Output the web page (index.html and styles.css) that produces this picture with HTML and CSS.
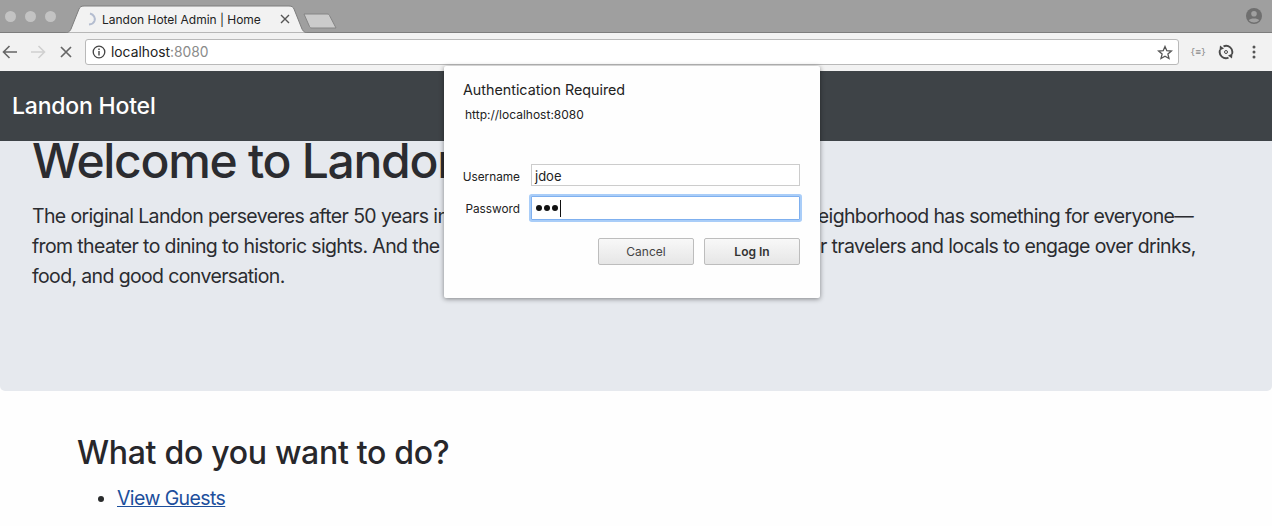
FILE: index.html
```html
<!DOCTYPE html>
<html lang="en">
<head>
<meta charset="utf-8">
<title>Landon Hotel Admin | Home</title>
<link rel="stylesheet" href="styles.css">
</head>
<body>
<div class="browser">
  <div class="tabstrip">
    <div class="lights"><i class="light"></i><i class="light"></i><i class="light"></i></div>
    <div class="tab">
      <svg class="tab-shape" width="243" height="28" viewBox="0 0 243 28"><path d="M0 28 C4 27.500 5 26 6 24 L14 4 C15 2 16 1 19 1 L224 1 C227 1 228 2 229 4 L237 24 C238 26 239 27.500 243 28 Z" fill="#f2f2f2" stroke="#7d7d7d" stroke-width="1"/></svg>
      <svg class="spinner" width="12" height="14" viewBox="0 0 12 14"><path d="M5 1.500 C9 2.500 10.500 6 9.500 9 C8.700 11 7 12.300 4 12.500" fill="none" stroke="#b4bdd0" stroke-width="2"/></svg>
      <span class="tab-title">Landon Hotel Admin | Home</span>
      <svg class="tab-close" width="10" height="10" viewBox="0 0 10 10"><path d="M1 1 L9 9 M9 1 L1 9" stroke="#555" stroke-width="1.400"/></svg>
    </div>
    <svg class="newtab" width="34" height="17" viewBox="0 0 34 17"><path d="M1 1 L24 1 C25.500 1 26 1.500 26.500 2.500 L33 15 L9 15 C7.500 15 7 14.500 6.500 13.500 Z" fill="#cbcbcb" stroke="#858585"/></svg>
    <svg class="avatar" width="18" height="18" viewBox="0 0 18 18"><circle cx="9" cy="9" r="8" fill="#6f6f6f"/><circle cx="9" cy="6.800" r="2.800" fill="#a0a0a0"/><path d="M3.800 13.300 C5 10.800 13 10.800 14.200 13.300 C12.800 15 10.800 15.500 9 15.500 C7.200 15.500 5.200 15 3.800 13.300 Z" fill="#a0a0a0"/></svg>
  </div>
  <div class="toolbar">
    <svg class="nav-icon" width="16" height="14" viewBox="0 0 16 14"><path d="M15 7 H2 M7.500 1 L1.500 7 L7.500 13" fill="none" stroke="#666" stroke-width="1.600"/></svg>
    <svg class="nav-icon" width="16" height="14" viewBox="0 0 16 14"><path d="M1 7 H14 M8.500 1 L14.500 7 L8.500 13" fill="none" stroke="#d0d0d0" stroke-width="1.600"/></svg>
    <svg class="nav-icon" width="14" height="14" viewBox="0 0 14 14"><path d="M2 2 L12 12 M12 2 L2 12" stroke="#666" stroke-width="1.700"/></svg>
    <div class="omnibox">
      <svg class="info" width="14" height="14" viewBox="0 0 14 14"><circle cx="7" cy="7" r="5.800" fill="none" stroke="#444" stroke-width="1.300"/><path d="M7 6 V10.500 M7 3.500 V5" stroke="#444" stroke-width="1.400"/></svg>
      <span class="url">localhost<span class="port">:8080</span></span>
      <svg class="star" width="16" height="15" viewBox="0 0 16 15"><path d="M8 1.500 L9.800 5.700 L14.400 6.100 L10.900 9.100 L12 13.500 L8 11.200 L4 13.500 L5.100 9.100 L1.600 6.100 L6.200 5.700 Z" fill="none" stroke="#555" stroke-width="1.300"/></svg>
    </div>
    <div class="extensions">
      <span class="ext-json">{≡}</span>
      <svg class="ext-sync" width="16" height="16" viewBox="0 0 16 16"><path d="M5.500 2.300 A6.300 6.300 0 0 1 14 10 M10.500 13.700 A6.300 6.300 0 0 1 2 6" fill="none" stroke="#4a4a4a" stroke-width="1.900"/><path d="M2 1.500 L6 4.500 L1.500 6.500 Z M14 14.500 L10 11.500 L14.500 9.500 Z" fill="#4a4a4a"/><circle cx="8" cy="8" r="1.500" fill="none" stroke="#4a4a4a" stroke-width="1"/></svg>
      <svg class="ext-menu" width="4" height="14" viewBox="0 0 4 14"><circle cx="2" cy="2" r="1.500" fill="#555"/><circle cx="2" cy="7" r="1.500" fill="#555"/><circle cx="2" cy="12" r="1.500" fill="#555"/></svg>
    </div>
  </div>
  <div class="page">
    <nav class="navbar"><a class="brand">Landon Hotel</a></nav>
    <section class="jumbotron">
      <h1 class="display">Welcome to Landon Hotel</h1>
      <p class="lead">The original Landon perseveres after 50 years in the heart of West London. The West End neighborhood has something for everyone—from theater to dining to historic sights. And the not-to-miss Rooftop Cafe is a great place for travelers and locals to engage over drinks, food, and good conversation.</p>
    </section>
    <section class="actions">
      <h2 class="actions-title">What do you want to do?</h2>
      <ul class="actions-list"><li><a class="action-link" href="#">View Guests</a></li></ul>
    </section>
  </div>
  <div class="dialog">
    <div class="dialog-title">Authentication Required</div>
    <div class="dialog-origin">http://localhost:8080</div>
    <div class="field field-user">
      <label class="field-label">Username</label>
      <div class="input">jdoe</div>
    </div>
    <div class="field field-pass">
      <label class="field-label">Password</label>
      <div class="input input-focus"><span class="dots"><i class="dot"></i><i class="dot"></i><i class="dot"></i></span><span class="caret"></span></div>
    </div>
    <div class="dialog-buttons">
      <div class="btn">Cancel</div>
      <div class="btn btn-default">Log In</div>
    </div>
  </div>
</div>
</body>
</html>
```
FILE: styles.css
```css
* { box-sizing: border-box; }
html, body { margin: 0; padding: 0; height: 100%; overflow: hidden; background: #fefefe; }
body { font-family: Inter, "Liberation Sans", sans-serif; color: #292b2c; }
.browser { position: relative; width: 1272px; height: 526px; overflow: hidden; }

.tabstrip { height: 33px; background: #9f9f9f; border-bottom: 1px solid #7d7d7d; display: flex; align-items: flex-start; position: relative; }
.lights { display: flex; gap: 9px; padding: 11px 0 0 5px; width: 65px; flex: none; }
.light { width: 11px; height: 11px; border-radius: 50%; background: #c3c3c3; display: block; }
.tab { position: relative; width: 243px; height: 28px; margin-top: 5px; flex: none; display: flex; align-items: center; }
.tab-shape { position: absolute; left: 0; top: 0; }
.spinner { position: relative; margin-left: 20px; flex: none; }
.tab-title { position: relative; margin-left: 5px; font-size: 12px; color: #222; white-space: nowrap; flex: none; width: 178px; letter-spacing: -0.02px; }
.tab-close { position: relative; flex: none; }
.newtab { margin: 13px 0 0 -5px; flex: none; }
.avatar { margin: 7px 9px 0 auto; flex: none; }

.toolbar { height: 38px; background: #f2f2f2; display: flex; align-items: center; padding: 0 14px 0 2px; }
.nav-icon { flex: none; margin-right: 12px; }
.nav-icon:nth-child(2) { margin-right: 13px; }
.omnibox { flex: none; width: 1094px; height: 26px; background: #fff; border: 1px solid #b9b9b9; border-radius: 3px; display: flex; align-items: center; padding: 0 5px 0 6px; }
.info { flex: none; }
.url { margin-left: 5px; font-size: 13.800px; color: #222; }
.port { color: #8a8a8a; }
.star { margin-left: auto; flex: none; }
.extensions { display: flex; align-items: center; margin-left: 11px; flex: 1; }
.ext-json { font-size: 9px; color: #888; font-family: "DejaVu Sans Mono", monospace; width: 16px; white-space: nowrap; flex: none; }
.ext-sync { margin-left: 12px; flex: none; }
.ext-menu { margin-left: 18px; flex: none; }

.page { display: flex; flex-direction: column; }
.navbar { height: 70px; background: #3e4347; display: flex; align-items: center; padding: 0 12px; position: relative; z-index: 1; }
.brand { color: #fff; font-size: 23px; font-weight: 500; letter-spacing: -0.2px; }
.jumbotron { height: 250px; background: #e6e9ee; border-radius: 0 0 5px 5px; padding: 0 32px; }
.display { margin: -9px 0 0; font-size: 48px; line-height: 58px; font-weight: 500; color: #2b2c30; letter-spacing: -1.3px; white-space: nowrap; }
.lead { margin: 11px 0 0; font-size: 19.500px; line-height: 30px; color: #2b2c30; width: 1170px; letter-spacing: -0.63px; }
.actions { padding: 40px 77px 0; }
.actions-title { margin: 0; font-size: 32px; line-height: 44px; font-weight: 500; color: #27272b; letter-spacing: -0.3px; }
.actions-list { margin: 8px 0 0; padding: 0 0 0 40px; font-size: 19.500px; line-height: 30px; letter-spacing: -0.6px; }
.action-link { color: #1d4f9c; text-decoration: underline; }

.dialog { position: absolute; left: 444px; top: 66px; width: 376px; height: 232px; background: #fefefe; border-radius: 2px; box-shadow: 0 1px 5px rgba(0,0,0,.45); z-index: 5; color: #222; }
.dialog-title { padding: 15px 0 0 19px; font-size: 14.300px; line-height: 18px; }
.dialog-origin { padding: 8px 0 0 21px; font-size: 12px; line-height: 15px; }
.field { display: flex; align-items: center; position: relative; }
.field-user { margin-top: 42px; height: 22px; }
.field-pass { margin-top: 10px; height: 24px; }
.field-label { width: 76px; text-align: right; font-size: 11.800px; flex: none; padding-top: 3px; }
.field-pass .field-label { padding-top: 1px; }
.input { margin-left: 11px; width: 269px; height: 22px; border: 1px solid #ccc; background: #fff; font-size: 13px; padding: 1px 0 0 3px; line-height: 20px; }
.input-focus { width: 269px; height: 24px; border: 1px solid #7fb0ef; border-radius: 1px; box-shadow: 0 0 0 2px #a9cdf8; display: flex; align-items: center; padding: 0 0 0 4px; }
.dots { display: flex; gap: 2px; }
.dot { display: block; width: 6px; height: 6px; border-radius: 50%; background: #111; }
.caret { display: block; width: 1px; height: 17px; background: #111; margin-left: 2px; }
.dialog-buttons { display: flex; justify-content: flex-end; gap: 10px; padding: 18px 20px 0 0; }
.btn { width: 96px; height: 27px; border: 1px solid #bdbdbd; border-radius: 2px; background: linear-gradient(#f8f8f8, #e6e6e6); font-size: 12px; color: #444; display: flex; align-items: center; justify-content: center; }
.btn-default { font-weight: 600; color: #333; }
```
